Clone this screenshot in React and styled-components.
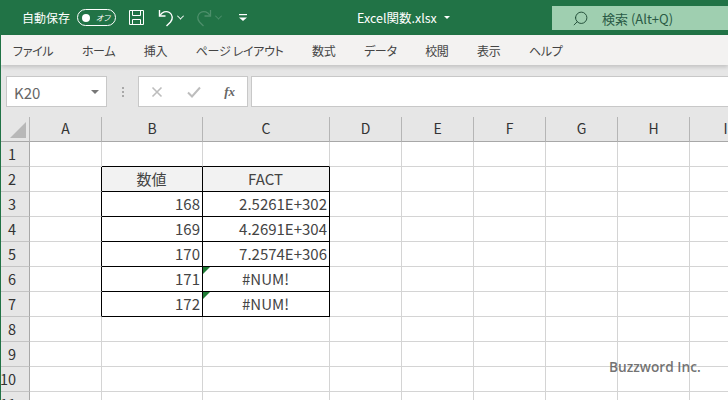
import React from 'react';
import styled, { createGlobalStyle } from 'styled-components';
import { Search } from 'lucide-react';

const tabs = ['ファイル', 'ホーム', '挿入', 'ページ レイアウト', '数式', 'データ', '校閲', '表示', 'ヘルプ'];
const columns = ['A', 'B', 'C', 'D', 'E', 'F', 'G', 'H', 'I'];
const rowNumbers = [1, 2, 3, 4, 5, 6, 7, 8, 9, 10, 11];

const tableData = {
    2: { B: { text: '数値', align: 'center', head: true }, C: { text: 'FACT', align: 'center', head: true } },
    3: { B: { text: '168', align: 'right' }, C: { text: '2.5261E+302', align: 'right' } },
    4: { B: { text: '169', align: 'right' }, C: { text: '4.2691E+304', align: 'right' } },
    5: { B: { text: '170', align: 'right' }, C: { text: '7.2574E+306', align: 'right' } },
    6: { B: { text: '171', align: 'right' }, C: { text: '#NUM!', align: 'center', flag: true } },
    7: { B: { text: '172', align: 'right' }, C: { text: '#NUM!', align: 'center', flag: true } },
};

const inTable = (row, col) => row >= 2 && row <= 7 && (col === 'B' || col === 'C');

const App = () => {
    return (
        <Wrapper>
            <GlobalStyle />
            <TitleBar>
                <AutoSave>自動保存</AutoSave>
                <Toggle>
                    <ToggleDot />
                    <ToggleLabel>オフ</ToggleLabel>
                </Toggle>
                <QuickIcons>
                    <SaveIcon width="17" height="17" viewBox="0 0 17 17" fill="none" stroke="#fff" strokeWidth="1">
                        <path d="M1.500 1.500h14v14h-14z" />
                        <path d="M4.500 1.500v5h8v-5" />
                        <path d="M4.500 15.500v-5h8v5" />
                    </SaveIcon>
                    <UndoIcon width="16" height="18" viewBox="0 0 16 18" fill="none" stroke="#fff" strokeWidth="1.400">
                        <path d="M1.500 1v6h6" />
                        <path d="M2 6.500C4 3 8 1.500 11.500 3.500c3.500 2.500 3.500 6.500 1 9.500l-4 4" />
                    </UndoIcon>
                    <Caret $color="#fff" />
                    <RedoIcon width="16" height="18" viewBox="0 0 16 18" fill="none" stroke="#4d8f6b" strokeWidth="1.300">
                        <path d="M14.500 1v6h-6" />
                        <path d="M14 6.500C12 3 8 1.500 4.500 3.500c-3.500 2.500-3.500 6.500-1 9.500l4 4" />
                    </RedoIcon>
                    <Caret $color="#4d8f6b" />
                    <MoreIcon width="8" height="9" viewBox="0 0 8 9" fill="#fff">
                        <rect x="0" y="1" width="8" height="1.200" />
                        <path d="M0 4.500h8l-4 3.500z" />
                    </MoreIcon>
                </QuickIcons>
                <FileName>
                    Excel関数.xlsx
                    <FileCaret />
                </FileName>
                <SearchBox>
                    <Search size={17} strokeWidth={1.300} color="#1f4a35" style={{ transform: 'scaleX(-1)' }} />
                    <SearchText>検索 (Alt+Q)</SearchText>
                </SearchBox>
            </TitleBar>

            <Ribbon>
                {tabs.map((tab) => (
                    <Tab key={tab}>{tab}</Tab>
                ))}
            </Ribbon>

            <FormulaArea>
                <NameBox>
                    <span>K20</span>
                    <NameCaret />
                </NameBox>
                <Dots>
                    <i />
                    <i />
                    <i />
                </Dots>
                <FormulaButtons>
                    <svg width="12" height="12" viewBox="0 0 12 12" stroke="#bdbdbd" strokeWidth="1.600" fill="none">
                        <path d="M1.500 1.500l9 9M10.500 1.500l-9 9" />
                    </svg>
                    <svg width="14" height="12" viewBox="0 0 14 12" stroke="#bdbdbd" strokeWidth="2" fill="none">
                        <path d="M1 6.500l4 4 8-9" />
                    </svg>
                    <FxLabel>fx</FxLabel>
                </FormulaButtons>
                <FormulaInput />
            </FormulaArea>

            <Sheet>
                <Corner>
                    <CornerMark />
                </Corner>
                {columns.map((col) => (
                    <ColumnHead key={col}>{col}</ColumnHead>
                ))}
                {rowNumbers.map((row) => (
                    <React.Fragment key={row}>
                        <RowHead>{row}</RowHead>
                        {columns.map((col, i) => {
                            const cell = tableData[row] && tableData[row][col];
                            const next = columns[i + 1];
                            return (
                                <Cell
                                    key={col}
                                    $head={cell && cell.head}
                                    $align={cell && cell.align}
                                    $darkRight={inTable(row, col) || inTable(row, next)}
                                    $darkBottom={inTable(row, col) || inTable(row + 1, col)}
                                >
                                    {cell && cell.flag && <ErrorFlag />}
                                    {cell && cell.text}
                                </Cell>
                            );
                        })}
                    </React.Fragment>
                ))}
            </Sheet>

            <Watermark>Buzzword Inc.</Watermark>
        </Wrapper>
    );
};

export default App;

const GlobalStyle = createGlobalStyle`
    html, body {
        margin: 0;
        padding: 0;
        width: 728px;
        height: 400px;
        overflow: hidden;
        background: #ffffff;
    }
`;

const Wrapper = styled.div`
    position: relative;
    width: 728px;
    height: 400px;
    overflow: hidden;
    display: flex;
    flex-direction: column;
    border-left: 1px solid #217346;
    box-sizing: border-box;
    font-family: "Noto Sans CJK JP", "Noto Sans", sans-serif;
    font-feature-settings: "palt";
    color: #333333;
`;

const TitleBar = styled.div`
    height: 35px;
    flex: none;
    margin-left: -1px;
    padding-left: 22px;
    display: flex;
    align-items: center;
    background: #217346;
    color: #ffffff;
`;

const AutoSave = styled.span`
    font-size: 12px;
    width: 55px;
    flex: none;
`;

const Toggle = styled.div`
    width: 28px;
    height: 15px;
    border: 1px solid #ffffff;
    border-radius: 9px;
    display: flex;
    align-items: center;
    justify-content: space-between;
    padding: 0 5px 0 4px;
    flex: none;
`;

const ToggleDot = styled.span`
    width: 8px;
    height: 8px;
    border-radius: 50%;
    background: #ffffff;
`;

const ToggleLabel = styled.span`
    font-size: 8px;
    line-height: 1;
    font-style: italic;
`;

const QuickIcons = styled.div`
    display: flex;
    align-items: center;
    margin-left: 12px;
    flex: none;
`;

const SaveIcon = styled.svg`
    flex: none;
`;

const UndoIcon = styled.svg`
    flex: none;
    margin-left: 13px;
`;

const RedoIcon = styled.svg`
    flex: none;
    margin-left: 13px;
`;

const MoreIcon = styled.svg`
    flex: none;
    margin-left: 18px;
`;

const Caret = styled.span`
    width: 4px;
    height: 4px;
    margin-left: 4px;
    border-right: 1px solid ${(p) => p.$color};
    border-bottom: 1px solid ${(p) => p.$color};
    transform: rotate(45deg) translate(-1px, -1px);
`;

const FileName = styled.div`
    margin-left: 110px;
    flex: none;
    width: 195px;
    display: flex;
    align-items: center;
    font-size: 12.500px;
`;

const FileCaret = styled.span`
    margin-left: 7px;
    border-left: 3px solid transparent;
    border-right: 3px solid transparent;
    border-top: 3px solid #ffffff;
`;

const SearchBox = styled.div`
    flex: 1;
    align-self: flex-start;
    margin-top: 6px;
    height: 24px;
    padding-left: 20px;
    display: flex;
    align-items: center;
    background: #9fcfb0;
`;

const SearchText = styled.span`
    margin-left: 13px;
    font-size: 13px;
    color: #2a5a45;
`;

const Ribbon = styled.div`
    height: 30px;
    flex: none;
    padding-left: 12px;
    display: flex;
    align-items: center;
    gap: 28.500px;
    background: #f3f2f1;
    box-shadow: 0 2px 4px rgba(0, 0, 0, 0.16);
    position: relative;
    z-index: 1;
`;

const Tab = styled.span`
    font-size: 12px;
    letter-spacing: -0.3px;
    color: #444444;
    white-space: nowrap;
`;

const FormulaArea = styled.div`
    height: 52px;
    flex: none;
    padding: 11px 0 10px 5px;
    box-sizing: border-box;
    display: flex;
    align-items: stretch;
    background: #e6e6e6;
`;

const NameBox = styled.div`
    width: 101px;
    box-sizing: border-box;
    background: #ffffff;
    border: 1px solid #c8c8c8;
    display: flex;
    align-items: center;
    justify-content: space-between;
    padding: 1px 7px 0;
    font-size: 15px;
    color: #666666;
`;

const NameCaret = styled.span`
    border-left: 4px solid transparent;
    border-right: 4px solid transparent;
    border-top: 4px solid #777777;
`;

const Dots = styled.div`
    width: 31px;
    flex: none;
    display: flex;
    flex-direction: column;
    align-items: center;
    justify-content: center;
    gap: 2px;

    i {
        width: 2px;
        height: 2px;
        background: #a8a8a8;
    }
`;

const FormulaButtons = styled.div`
    width: 110px;
    box-sizing: border-box;
    flex: none;
    background: #ffffff;
    border: 1px solid #c8c8c8;
    padding: 0 12px;
    display: flex;
    align-items: center;
    justify-content: space-between;
`;

const FxLabel = styled.span`
    font-family: "Liberation Serif", serif;
    font-style: italic;
    font-weight: 700;
    font-size: 13px;
    color: #666666;
`;

const FormulaInput = styled.div`
    flex: 1;
    margin-left: 3px;
    background: #ffffff;
    border: 1px solid #c8c8c8;
    border-right: none;
`;

const Sheet = styled.div`
    display: grid;
    flex: none;
    grid-template-columns: 29px 72px 101px 127px 72px 72px 72px 72px 72px 72px;
    grid-template-rows: 25px repeat(11, 25px);
    background: #ffffff;
`;

const Corner = styled.div`
    position: relative;
    box-sizing: border-box;
    background: #e6e6e6;
    border-right: 1px solid #b5b5b5;
    border-bottom: 1px solid #a8a8a8;
`;

const CornerMark = styled.span`
    position: absolute;
    right: 3px;
    bottom: 3px;
    width: 0;
    height: 0;
    border-left: 16px solid transparent;
    border-bottom: 16px solid #b8b8b8;
`;

const ColumnHead = styled.div`
    box-sizing: border-box;
    padding-bottom: 2px;
    background: #e6e6e6;
    border-bottom: 1px solid #a8a8a8;
    border-right: 1px solid #b5b5b5;
    display: flex;
    align-items: center;
    justify-content: center;
    font-size: 14px;
    color: #333333;
`;

const RowHead = styled.div`
    box-sizing: border-box;
    background: #e6e6e6;
    border-right: 1px solid #a8a8a8;
    border-bottom: 1px solid #c4c4c4;
    padding: 0 13px 2px 0;
    display: flex;
    align-items: center;
    justify-content: flex-end;
    font-size: 14.500px;
    color: #333333;
`;

const Cell = styled.div`
    position: relative;
    box-sizing: border-box;
    min-width: 0;
    padding: 0 2px 2px 1px;
    background: ${(p) => (p.$head ? '#f2f2f2' : '#ffffff')};
    border-right: 1px solid ${(p) => (p.$darkRight ? '#000000' : '#d4d4d4')};
    border-bottom: 1px solid ${(p) => (p.$darkBottom ? '#000000' : '#d4d4d4')};
    display: flex;
    align-items: center;
    justify-content: ${(p) => (p.$align === 'right' ? 'flex-end' : 'center')};
    font-size: 15px;
    color: #444444;
    white-space: nowrap;
`;

const ErrorFlag = styled.span`
    position: absolute;
    left: 0;
    top: 0;
    width: 0;
    height: 0;
    border-top: 7px solid #1e7b34;
    border-right: 7px solid transparent;
`;

const Watermark = styled.div`
    position: absolute;
    left: 608px;
    top: 357px;
    font-family: "Open Sans", "Noto Sans", sans-serif;
    font-size: 13.700px;
    font-weight: 600;
    color: rgba(90, 90, 90, 0.85);
    white-space: nowrap;
`;
